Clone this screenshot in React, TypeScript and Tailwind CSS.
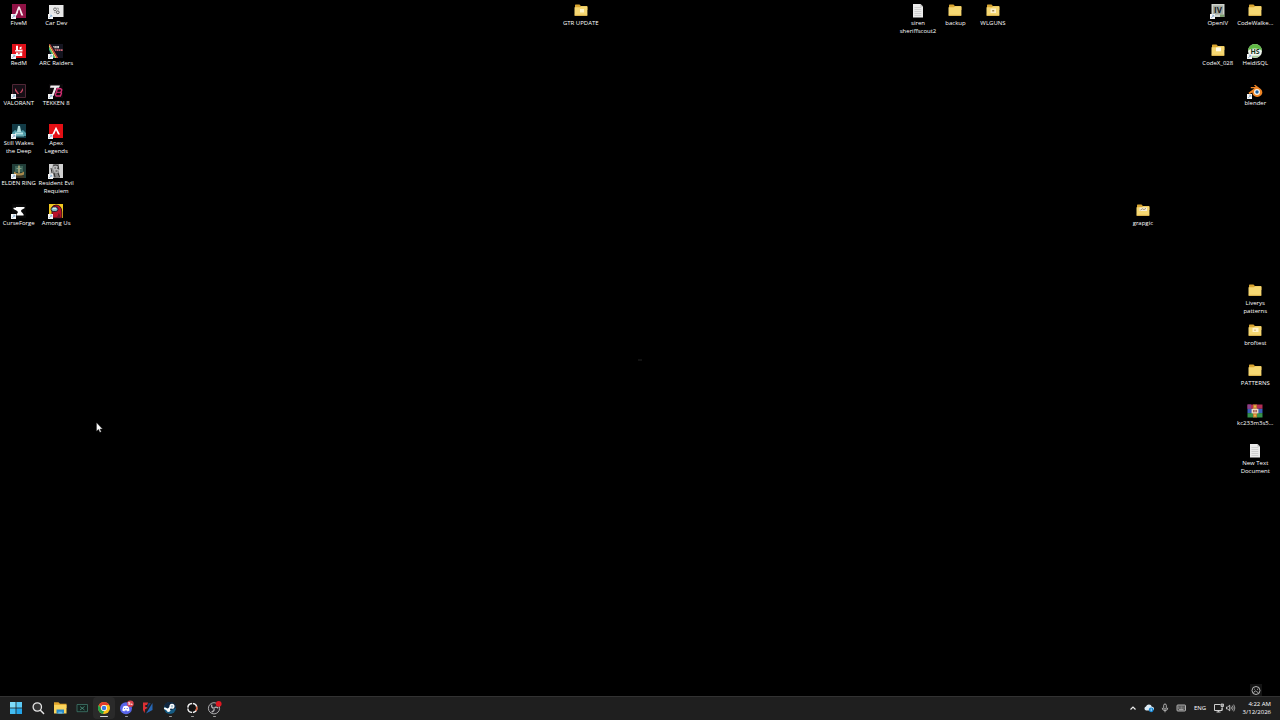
import type { ReactNode } from "react";

type DesktopItem = {
  label: string;
  col: number;
  row: number;
  icon: ReactNode;
  shortcut?: boolean;
};

function Svg({ children }: { children: ReactNode }) {
  return (
    <svg viewBox="0 0 16 16" className="h-4 w-4" aria-hidden="true">
      {children}
    </svg>
  );
}

function Folder({ children }: { children?: ReactNode }) {
  return (
    <Svg>
      <g transform="translate(0 -1)">
        <path d="M2 3.2q0-.7.7-.7h3.8l1.4 1.4h5.800q.7 0 .7.7V8H2z" fill="#d9a530" />
        <path d="M1.500 5.300h5.400l1.300-1h5.600q.6 0 .6.6v8.200q0 .7-.7.7H2.200q-.7 0-.7-.7z" fill="#f6d873" />
        <path d="M1.600 12.800h12.700v.4q0 .6-.6.6H2.200q-.6 0-.6-.6z" fill="#e6bc4d" />
        {children}
      </g>
    </Svg>
  );
}

function TextFile() {
  return (
    <Svg>
      <path d="M3 1h7.500L13 3.500v11H3z" fill="#ececec" />
      <path d="M10.500 1v2.500H13z" fill="#b5b5b5" />
      <path d="M4.500 4.500h6.800M4.500 6.500h6.800M4.500 8.500h6.800M4.500 10.500h6.800M4.500 12.500h6.800" stroke="#c4c4c4" strokeWidth=".7" />
    </Svg>
  );
}

// Small white arrow badge that marks a shortcut
function ShortcutBadge() {
  return (
    <svg viewBox="0 0 5 5" className="absolute bottom-0 left-0 h-[5px] w-[5px]" aria-hidden="true">
      <path d="M0 0h5v5H0z" fill="#f4f4f4" />
      <path d="M1.2 4l2.300-2.500M2 1.200h1.800V3" fill="none" stroke="#6f9cc8" strokeWidth=".7" />
    </svg>
  );
}

const fiveM = (
  <Svg>
    <path d="M1 1h14v14H1z" fill="#8f1245" />
    <path d="M7.200 3.400h1.500l3.600 9h-2L8 6.300l-1 3.100-1.400 3H3.800z" fill="#f7e9ef" />
    <path d="M7 9.800l1-3.400 1 2.200z" fill="#8f1245" />
  </Svg>
);

const redM = (
  <Svg>
    <path d="M1 1h14v14H1z" fill="#e01019" />
    <path d="M5 2.800h2V7H5zM8.600 4.200l2-.8v2.200l-2 1z" fill="#fff" />
    <path d="M4 7.300l7.500-.8v2H4z" fill="#fff" />
    <path d="M5 9.500h2v1.800h1.800V9.500h2.400v3.600H5z" fill="#fff" />
    <path d="M7.500 9.300h1v1.200h-1z" fill="#fff" />
  </Svg>
);

const valorant = (
  <Svg>
    <path d="M1.500 1.500h13v13h-13z" fill="#160e15" stroke="#4f2635" />
    <path d="M4 5l4.200 6H6.600L4 7.700zM12 5v2.700L10.200 10H8.800z" fill="#c4455f" />
  </Svg>
);

const stillWakes = (
  <Svg>
    <path d="M1 1h14v14H1z" fill="#123b46" />
    <path d="M1 10l3-3 2 1 2-6 2 6 2-1 3 3v3H1z" fill="#4f9aa6" />
    <path d="M7 3h2l1 6H6zM4 9.500h8v2H4z" fill="#b5e0e1" />
    <path d="M3 13h10" stroke="#8cc4c6" strokeWidth=".8" />
  </Svg>
);

const eldenRing = (
  <Svg>
    <path d="M1 1h14v14H1z" fill="#203d38" />
    <path d="M4 3h8v6H4z" fill="#3d6457" />
    <path d="M8 2.500v8" stroke="#d7c187" strokeWidth="1.200" />
    <path d="M3 8.500q5 4 10 0v3q-5 3-10 0z" fill="#a98a4c" />
    <path d="M5.500 5.500h5" stroke="#86a68c" strokeWidth=".9" />
    <path d="M3 12.500h10V15H3z" fill="#3b3626" />
  </Svg>
);

const curseForge = (
  <Svg>
    <path d="M1 1h14v14H1z" fill="#080808" />
    <path d="M5 4h8.500v1.200l-2.800 1.500q-1.600 1.200.6 3l1.300 1.800v1H5.500v-1.200l1.300-1.600Q7.200 8 5.400 7.400L2.500 6V4.800H5z" fill="#fff" />
  </Svg>
);

const carDev = (
  <Svg>
    <path d="M1 2h14.500v12H1z" fill="#e8e8e8" />
    <circle cx="7" cy="6.300" r="1.400" fill="none" stroke="#666" strokeWidth=".9" />
    <circle cx="9.800" cy="9.300" r="1.400" fill="none" stroke="#444" strokeWidth=".9" />
    <path d="M8.400 5.200h2v1.600M6 9.200h1.500" fill="none" stroke="#888" strokeWidth=".8" />
  </Svg>
);

const arcRaiders = (
  <Svg>
    <path d="M1 1h14v14H1z" fill="#14141f" />
    <path d="M1 3l6.200 12H5.400L1 6.500z" fill="#3fc27c" />
    <path d="M1 1.200L8.800 15H7.200L1 3.400z" fill="#f2cf55" />
    <path d="M2 1l8.200 14H8.800L1 1z" fill="#de4b45" />
    <path d="M5 3h6v2.300H6.200z" fill="#d8cfce" />
    <path d="M6.400 6.200h8.200v1.900H7.500z" fill="#cf6773" />
    <path d="M6.800 3v2.300M8.900 3v2.300M8.500 6.200v1.900M10.500 6.200v1.900M12.500 6.200v1.900" stroke="#14141f" strokeWidth=".5" />
  </Svg>
);

const tekken = (
  <Svg>
    <path d="M1 1h14v14H1z" fill="#0a0709" />
    <path d="M2.500 2.500h9.500l-1 2.200H8.600L5.500 13H3.300l3-8.300H2z" fill="#f3edf0" />
    <path d="M9.300 5.800h3.500l1 1.200-.8 2 .4 1.500-1 2.500H8.200l-.9-1.300 1-2.400z" fill="none" stroke="#d32d72" strokeWidth="1.400" />
    <path d="M8.800 9.300H13" stroke="#d32d72" />
  </Svg>
);

const apex = (
  <Svg>
    <path d="M1 1h14v14H1z" fill="#e30f14" />
    <path d="M8 3.800l4 7.700h-2L8 7.200l-1.900 4.300H4.200z" fill="#fff" />
  </Svg>
);

const residentEvil = (
  <Svg>
    <path d="M1 1h14v14H1z" fill="#858585" />
    <path d="M1 1h4l-1 6 2 8H1zM11 1h4v14h-3l-1-6z" fill="#d0d0d0" />
    <path d="M5 2h5l1.500 4-2 4-3-.5L5 6z" fill="#b9b9b9" />
    <path d="M5 3l2-1 3 .5.8 4M6.500 5h1.300M9 5.200h1M7.500 8h2M6 10l1 4M10 10l1.500 4M3 5l1 5" stroke="#242424" strokeWidth=".9" fill="none" />
  </Svg>
);

const amongUs = (
  <Svg>
    <path d="M1 1h14v14H1z" fill="#f2c81f" />
    <path d="M4 15V6q0-4 4-4 5.500 0 5.800 7v6z" fill="#b90f28" stroke="#280a16" strokeWidth=".9" />
    <rect x="3" y="4" width="7" height="4.400" rx="2.200" fill="#8cc5d4" stroke="#150f1c" strokeWidth=".9" />
    <path d="M5 5.200h3" stroke="#fff" strokeWidth=".9" />
    <path d="M10.500 10q2 1 1.500 5H6q4 0 4.500-5z" fill="#6e1028" />
  </Svg>
);

const openIV = (
  <Svg>
    <path d="M1.500 1h13v13h-13z" fill="#cfd3cc" />
    <path d="M3 2.500h10v9H3z" fill="#a3aaa3" />
    <text x="8" y="10" textAnchor="middle" fontSize="8" fontWeight="700" fill="#17201e">IV</text>
    <path d="M10 11.500h4V14h-4z" fill="#7da06f" />
  </Svg>
);

const heidi = (
  <Svg>
    <circle cx="8" cy="8" r="7" fill="#eef3eb" />
    <path d="M1 8a7 7 0 0 1 14 0q-1-2.500-7-2.500T1 8z" fill="#5fb944" />
    <path d="M2.500 12.200q5.500 1 11 0-5.500 5-11 0z" fill="#a9cb9d" />
    <text x="8" y="10.600" textAnchor="middle" fontSize="7" fontWeight="700" fill="#16331c">HS</text>
  </Svg>
);

const blender = (
  <Svg>
    <path d="M1.500 9.800L7.500 5.300H3.800V4h5L7 2.600 8.200 1.700l5.500 4.400a5 4.500 0 1 1-8.400 3.400l-2.800 1.700z" fill="#ef8424" />
    <circle cx="10" cy="9" r="3" fill="#f5f2ec" />
    <circle cx="10" cy="9" r="1.700" fill="#22609c" />
  </Svg>
);

const winrar = (
  <Svg>
    <path d="M.5 1.500h15v4.300H.5z" fill="#b32d55" />
    <path d="M.5 5.800h15v4.300H.5z" fill="#3b5fb8" />
    <path d="M.5 10.100h15v4.400H.5z" fill="#35914a" />
    <path d="M.5 1.500h3.500v4.300H.5z" fill="#87418f" />
    <path d="M6 1.500h4v13H6z" fill="#c37a33" />
    <path d="M4.600 5.800h6.800v4.600H4.600z" fill="#f0d8c0" />
    <path d="M6.300 7h1.200v2.300H6.300zM8.500 7h1.200v2.300H8.500z" fill="#8b3a32" />
    <path d="M7 2.500h2v2H7zM7 11.500h2v2H7z" fill="#e7b54b" />
  </Svg>
);

const desktopItems: DesktopItem[] = [
  { label: "FiveM", col: 1, row: 1, icon: fiveM, shortcut: true },
  { label: "RedM", col: 1, row: 2, icon: redM, shortcut: true },
  { label: "VALORANT", col: 1, row: 3, icon: valorant, shortcut: true },
  { label: "Still Wakes\nthe Deep", col: 1, row: 4, icon: stillWakes, shortcut: true },
  { label: "ELDEN RING", col: 1, row: 5, icon: eldenRing, shortcut: true },
  { label: "CurseForge", col: 1, row: 6, icon: curseForge, shortcut: true },
  { label: "Car Dev", col: 2, row: 1, icon: carDev, shortcut: true },
  { label: "ARC Raiders", col: 2, row: 2, icon: arcRaiders, shortcut: true },
  { label: "TEKKEN 8", col: 2, row: 3, icon: tekken, shortcut: true },
  { label: "Apex\nLegends", col: 2, row: 4, icon: apex, shortcut: true },
  { label: "Resident Evil\nRequiem", col: 2, row: 5, icon: residentEvil, shortcut: true },
  { label: "Among Us", col: 2, row: 6, icon: amongUs, shortcut: true },
  {
    label: "GTR UPDATE",
    col: 16,
    row: 1,
    icon: <Folder><path d="M7 7h4v3.500H7z" fill="#fff3c4" /></Folder>,
  },
  { label: "siren\nsheriffscout2", col: 25, row: 1, icon: <TextFile /> },
  { label: "backup", col: 26, row: 1, icon: <Folder /> },
  {
    label: "WLGUNS",
    col: 27,
    row: 1,
    icon: <Folder><path d="M5.500 6.500h5.500v4.500H5.500z" fill="#fff1c6" /><path d="M7.200 8h2v1.500h-2z" fill="#a48a56" /></Folder>,
  },
  {
    label: "grapgic",
    col: 31,
    row: 6,
    icon: <Folder><path d="M4.500 5.500H12V9H4.500z" fill="#f7efd8" /><path d="M5.500 8l2-1.200 1.500.8 2-1.200" stroke="#8a785a" strokeWidth=".8" fill="none" /></Folder>,
  },
  { label: "OpenIV", col: 33, row: 1, icon: openIV, shortcut: true },
  {
    label: "CodeX_028",
    col: 33,
    row: 2,
    icon: <Folder><path d="M6 5.500h5v3.800H6z" fill="#fffbe8" /></Folder>,
  },
  { label: "CodeWalke...", col: 34, row: 1, icon: <Folder /> },
  { label: "HeidiSQL", col: 34, row: 2, icon: heidi, shortcut: true },
  { label: "blender", col: 34, row: 3, icon: blender, shortcut: true },
  { label: "Liverys\npatterns", col: 34, row: 8, icon: <Folder /> },
  {
    label: "broftest",
    col: 34,
    row: 9,
    icon: <Folder><path d="M5.500 5.800h6v4.200h-6z" fill="#fff3c9" /><path d="M7 7.500h2V9H7z" fill="#e0c78e" /></Folder>,
  },
  { label: "PATTERNS", col: 34, row: 10, icon: <Folder /> },
  { label: "kc233m3s5...", col: 34, row: 11, icon: winrar },
  { label: "New Text\nDocument", col: 34, row: 12, icon: <TextFile /> },
];

const taskbarApps = [
  {
    name: "Start",
    icon: (
      <>
        <path d="M2 2h5.600v5.600H2z" fill="#7edcfa" />
        <path d="M8.400 2H14v5.600H8.400z" fill="#5bcaf6" />
        <path d="M2 8.400h5.600V14H2z" fill="#43bdf2" />
        <path d="M8.400 8.400H14V14H8.400z" fill="#23a4e8" />
      </>
    ),
  },
  {
    name: "Search",
    icon: (
      <>
        <circle cx="7.300" cy="7" r="4.200" fill="#353535" stroke="#e4e4e4" strokeWidth="1.300" />
        <path d="M10.400 10.300l3.200 3.200" stroke="#e4e4e4" strokeWidth="1.500" strokeLinecap="round" />
      </>
    ),
  },
  {
    name: "File Explorer",
    icon: (
      <>
        <path d="M2 2.300h4.500L8 3.700h6.500V8H2z" fill="#e0a32a" />
        <path d="M2 4.800h12.500v8.700H2z" fill="#f9d45d" />
        <path d="M4.500 9.500h7.500v4H4.500z" fill="#2789c9" />
        <path d="M6.300 11.700h4v1.800h-4z" fill="#65b9e7" />
      </>
    ),
  },
  {
    name: "Console",
    icon: (
      <>
        <path d="M3 4.500h10.500v7.200H3z" fill="#14221f" stroke="#3f7769" strokeWidth=".8" />
        <path d="M6 6.500l4.500 3.500M10.500 6.500L6 10" stroke="#519580" strokeWidth=".8" />
      </>
    ),
  },
  {
    name: "Chrome",
    active: true,
    running: true,
    icon: (
      <>
        <circle cx="8" cy="8" r="6" fill="#fbc116" />
        <path d="M2.800 5A6 6 0 0 1 13.200 5H8a3 3 0 0 0-2.600 4.500z" fill="#e33b2e" />
        <path d="M2.800 5l2.600 4.500A3 3 0 0 0 8 11l-1 3A6 6 0 0 1 2.800 5z" fill="#24a04b" />
        <circle cx="8" cy="8" r="3" fill="#fff" />
        <circle cx="8" cy="8" r="2.300" fill="#3978e6" />
      </>
    ),
  },
  {
    name: "Discord",
    running: true,
    icon: (
      <>
        <circle cx="8" cy="8.300" r="6" fill="#5865e8" />
        <path d="M5.600 6.200q2.300-.9 4.600 0 1.300 2 1.300 4.300-1 .8-2 .9l-.5-.9H6.800l-.5.9q-1-.1-2-.9 0-2.300 1.300-4.300z" fill="#fff" />
        <path d="M6.100 8.500h1M8.700 8.500h1" stroke="#5865e8" strokeWidth="1.200" />
        <circle cx="12.400" cy="3.800" r="3.300" fill="#d6434f" />
        <text x="12.400" y="5.200" textAnchor="middle" fontSize="4" fontWeight="700" fill="#fff">9+</text>
      </>
    ),
  },
  {
    name: "FModel",
    icon: (
      <>
        <path d="M3 2.500h5.200L7 5H5.300v2h2l-1 2H5.300l-.8 4L3 10z" fill="#dc3034" />
        <path d="M12.500 3v7L6 13.500 12.500 3z" fill="#2766b3" />
        <path d="M8.500 3h2.300L6.500 10z" fill="#173f78" />
      </>
    ),
  },
  {
    name: "Steam",
    running: true,
    icon: (
      <>
        <circle cx="8" cy="8" r="6" fill="#155b83" />
        <path d="M2.200 6.500A6 6 0 0 1 14 8L9 10z" fill="#10263f" />
        <path d="M2.200 8.200l4 1.700L8.500 7.200" stroke="#fff" strokeWidth="2" fill="none" />
        <circle cx="10" cy="6.200" r="1.900" fill="#a9c4d3" stroke="#fff" strokeWidth="1.300" />
        <circle cx="6.500" cy="10.300" r="1.800" fill="#fff" />
      </>
    ),
  },
  {
    name: "Recorder",
    running: true,
    icon: (
      <>
        <circle cx="8.300" cy="8" r="5.800" fill="#111" />
        <circle cx="8.300" cy="8" r="4.500" fill="none" stroke="#f1f1f1" strokeWidth="1.500" strokeDasharray="6.200 .870" />
        <path d="M12.600 6.600a4.500 4.500 0 0 1-.8 4.200" stroke="#de5b35" strokeWidth="1.500" fill="none" />
      </>
    ),
  },
  {
    name: "OBS Studio",
    running: true,
    icon: (
      <>
        <circle cx="8" cy="8.300" r="5.600" fill="#262429" stroke="#b9b9b9" strokeWidth=".9" />
        <path d="M8 8.300q-3-.6-2.200-3.700M8 8.300q2-2.300 4.300 0M8 8.300q.7 3-2.400 3.700" stroke="#b4b4b4" strokeWidth="1.300" fill="none" />
        <circle cx="8" cy="8.300" r="1" fill="#77747a" />
        <circle cx="12.700" cy="3.800" r="2.900" fill="#e01822" />
      </>
    ),
  },
];

const trayIcons = [
  {
    name: "Show hidden icons",
    icon: <path d="M5.500 9.500L8 7l2.500 2.500" stroke="#eee" strokeWidth="1.200" fill="none" />,
  },
  {
    name: "OneDrive",
    icon: (
      <>
        <path d="M5 10.500a2 2 0 0 1 0-3.900 3 3 0 0 1 5.800.2 1.800 1.800 0 0 1 .7 3.700z" fill="#dcebf5" />
        <circle cx="10.200" cy="9.800" r="2.400" fill="#1689d8" />
        <path d="M10.200 8.500v2.600" stroke="#fff" strokeWidth=".7" />
      </>
    ),
  },
  {
    name: "Microphone",
    icon: (
      <>
        <rect x="6.700" y="4" width="2.600" height="5.200" rx="1.300" fill="none" stroke="#d0d0d0" strokeWidth=".8" />
        <path d="M5.200 7.800a2.800 2.800 0 0 0 5.600 0M8 10.600v1.700" fill="none" stroke="#d0d0d0" strokeWidth=".8" />
      </>
    ),
  },
  {
    name: "Touch keyboard",
    icon: (
      <>
        <rect x="4" y="5" width="8.500" height="6" rx=".8" fill="#4a4a4a" stroke="#d0d0d0" strokeWidth=".8" />
        <path d="M5.300 7h6M5.300 8.200h6" stroke="#d0d0d0" strokeWidth=".7" strokeDasharray=".8 .6" />
        <path d="M6 9.600h4.500" stroke="#d0d0d0" strokeWidth=".7" />
      </>
    ),
  },
];

function App() {
  return (
    <div className="relative flex h-screen w-full flex-col overflow-hidden bg-black font-['Open_Sans','Noto_Sans',sans-serif] text-white select-none">
      <main className="flex min-h-0 flex-1 flex-col justify-between">
        <div className="grid auto-rows-[40px] grid-cols-[repeat(34,minmax(0,1fr))] pr-1.5">
          {desktopItems.map((item) => (
            <button
              key={item.label}
              type="button"
              className="flex flex-col items-center pt-[3px]"
              style={{ gridColumn: item.col, gridRow: item.row }}
            >
              <span className="relative">
                {item.icon}
                {item.shortcut && <ShortcutBadge />}
              </span>
              <span className="text-center text-[6px] leading-[8px] whitespace-pre">{item.label}</span>
            </button>
          ))}
        </div>

        <div className="flex justify-end pr-[18px]">
          <button type="button" aria-label="Widget" className="bg-[#141414]">
            <svg viewBox="0 0 12 12" className="h-3 w-3" aria-hidden="true">
              <circle cx="6" cy="6.500" r="4" fill="none" stroke="#c4c4c4" strokeWidth=".9" />
              <path d="M3.500 8.800l1.800-2 1.300.8 2 1.300M7 5.700l1.300-1M4.200 5l.8.500" fill="none" stroke="#c4c4c4" strokeWidth=".8" />
            </svg>
          </button>
        </div>
      </main>

      <footer className="flex h-6 shrink-0 items-center justify-between border-t border-[#323232] bg-[#1f1f1f] pr-[9px] pb-px pl-[5px]">
        <nav className="flex" aria-label="Taskbar">
          {taskbarApps.map((app) => (
            <button
              key={app.name}
              type="button"
              aria-label={app.name}
              className={`relative flex h-[22px] w-[22px] items-center justify-center rounded-sm ${
                app.active ? "bg-[#2a2a2a]" : ""
              }`}
            >
              <svg viewBox="0 0 16 16" className="h-4 w-4" aria-hidden="true">
                {app.icon}
              </svg>
              {app.running && (
                <span
                  className={`absolute bottom-0.5 h-px rounded-full ${
                    app.active ? "w-2 bg-[#d8d8d8]" : "w-[3px] bg-[#9a9a9a]"
                  }`}
                />
              )}
            </button>
          ))}
        </nav>

        <div className="flex items-center">
          {trayIcons.map((tray) => (
            <button key={tray.name} type="button" aria-label={tray.name}>
              <svg viewBox="0 0 16 16" className="h-4 w-4" aria-hidden="true">
                {tray.icon}
              </svg>
            </button>
          ))}
          <button type="button" className="w-[22px] text-center text-[6px] leading-[8px]">
            ENG
          </button>
          <button type="button" aria-label="Network and volume" className="flex">
            <svg viewBox="0 0 26 16" className="h-4 w-[26px]" aria-hidden="true">
              <path d="M9.500 4.500H3.500v6H11V8M5.500 12h4M7.300 10.500V12" fill="none" stroke="#e2e2e2" strokeWidth=".9" />
              <path d="M10 4h2.500v2.500H10zM11.200 6.500v4" fill="#8c8c8c" stroke="#e2e2e2" strokeWidth=".7" />
              <path d="M15.500 7h1.200l2-1.800v5.600l-2-1.800h-1.200z" fill="none" stroke="#e2e2e2" strokeWidth=".8" />
              <path d="M20 6.700q.9 1.300 0 2.600M21.300 5.600q1.700 2.400 0 4.800M22.700 4.600q2.300 3.400 0 6.800" fill="none" stroke="#bdbdbd" strokeWidth=".8" />
            </svg>
          </button>
          <button type="button" className="w-[34px] text-right text-[6px] leading-[8px] whitespace-nowrap">
            <span className="block">4:22 AM</span>
            <span className="block">3/12/2026</span>
          </button>
        </div>
      </footer>

      {/* Faint mark left in the middle of the wallpaper */}
      <span className="absolute top-1/2 left-1/2 h-[2px] w-1 -translate-x-1/2 -translate-y-1/2 bg-[#121212]" />

      {/* Mouse pointer */}
      <svg viewBox="0 0 7 11" className="pointer-events-none absolute top-[422px] left-[96px] h-[11px] w-[7px]" aria-hidden="true">
        <path d="M.6.8v8.300l2-1.800 1.300 3 1.300-.6-1.300-2.800h2.500z" fill="#fff" stroke="#444" strokeWidth=".4" />
      </svg>
    </div>
  );
}

export default App;
